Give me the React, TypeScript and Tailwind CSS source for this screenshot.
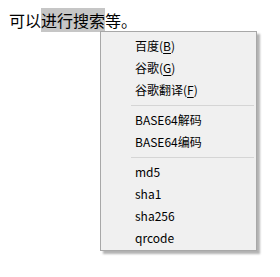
import React from 'react'

type Item = { label: string; key?: string } | 'sep'

const items: Item[] = [
  { label: '百度', key: 'B' },
  { label: '谷歌', key: 'G' },
  { label: '谷歌翻译', key: 'F' },
  'sep',
  { label: 'BASE64解码' },
  { label: 'BASE64编码' },
  'sep',
  { label: 'md5' },
  { label: 'sha1' },
  { label: 'sha256' },
  { label: 'qrcode' }
]

const App: React.FC = () => {
  return (
    <div
      className="relative w-[280px] h-[277px] bg-white text-black"
      style={{ fontFamily: '"Noto Sans CJK SC", "Noto Sans", sans-serif' }}
    >
      <p className="pt-[8px] pl-[9px] text-[16px] leading-[25px]">
        可以<span className="bg-[#c6c6c6]">进行搜索</span>等。
      </p>

      <div className="absolute left-[100px] top-[31px] w-[157px] h-[220px] bg-[#f0f0f0] border border-[#a8a8a8] shadow-[3px_3px_2px_rgba(0,0,0,0.3)] pt-[3px] text-[12px]">
        {items.map((it, i) =>
          it === 'sep' ? (
            <div key={i} className="pt-[4px] pb-[3px] pl-[30px] pr-[2px]">
              <div className="h-px bg-[#d5d5d5]" />
            </div>
          ) : (
            <div key={i} className="h-[22px] leading-[22px] pl-[34px] whitespace-nowrap">
              {it.label}
              {it.key && (
                <>
                  (<span className="underline underline-offset-2">{it.key}</span>)
                </>
              )}
            </div>
          )
        )}
      </div>
    </div>
  )
}

export default App
